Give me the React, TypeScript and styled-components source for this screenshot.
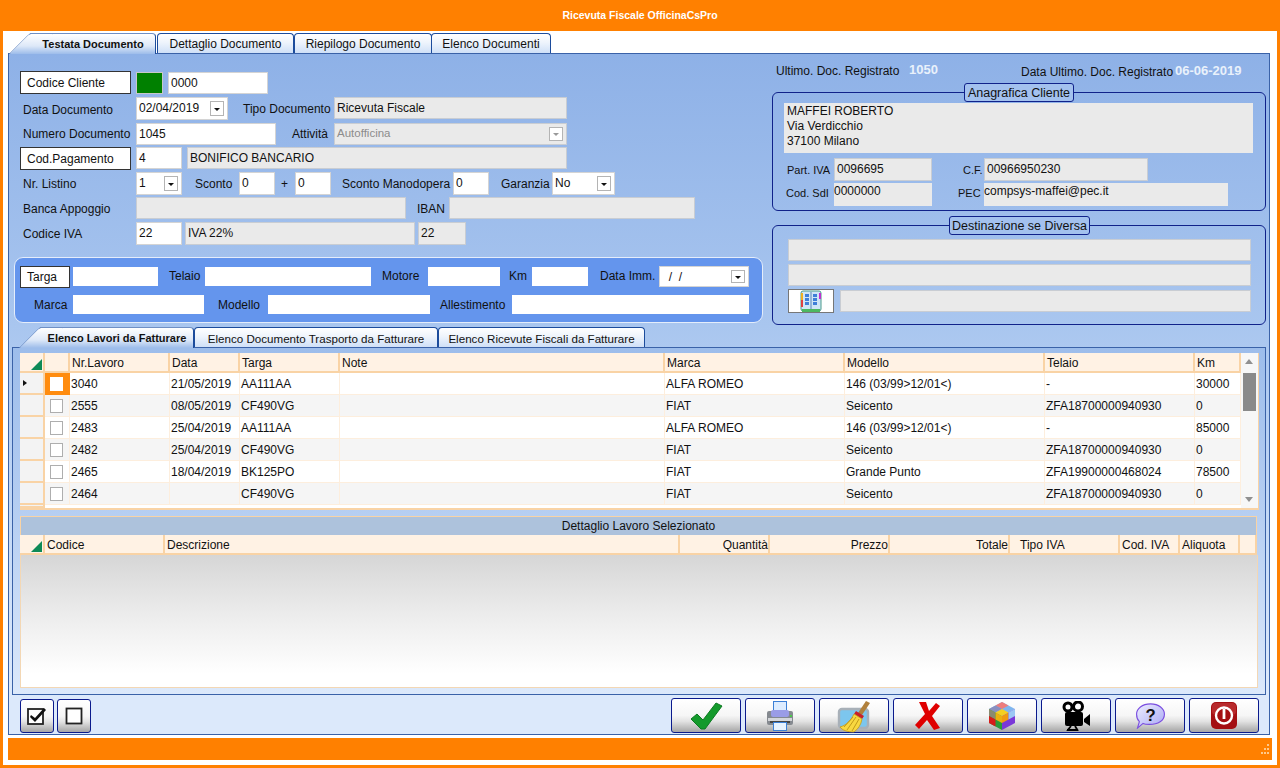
import React from "react";
import styled, { createGlobalStyle, css } from "styled-components";

const Global = createGlobalStyle`
  html, body { margin: 0; padding: 0; background: #ff8000; }
  #root { width: 1280px; height: 768px; overflow: hidden; position: relative; }
  * { box-sizing: border-box; }
`;

type P = { $x: number; $y: number; $w?: number; $h?: number };
const place = css<P>`
  position: absolute;
  left: ${(p) => p.$x}px;
  top: ${(p) => p.$y}px;
  ${(p) => (p.$w !== undefined ? `width: ${p.$w}px;` : "")}
  ${(p) => (p.$h !== undefined ? `height: ${p.$h}px;` : "")}
`;

const Win = styled.div`
  position: relative;
  width: 1280px;
  height: 768px;
  background: #ff8000;
  font-family: "Liberation Sans", Arial, sans-serif;
  font-size: 12px;
  color: #111;
  overflow: hidden;
`;
const Title = styled.div`
  position: absolute;
  left: 0; right: 0; top: 0; height: 31px;
  line-height: 31px;
  text-align: center;
  color: #fff;
  font-weight: 700;
  font-size: 10.5px;
`;
const Client = styled.div`
  position: absolute;
  left: 3px; top: 31px; width: 1274px; height: 734px;
  background: #fff;
`;
const Sheet = styled.div`
  position: absolute;
  left: 8px; top: 53px; width: 1262px; height: 682px;
  border: 1px solid #3a62a8;
  background: linear-gradient(180deg, #8eb1e7 0%, #a9c6ef 40%, #dce9fb 92%, #dce9fb 100%);
`;
const InnerSheet = styled.div`
  position: absolute;
  left: 12px; top: 347px; width: 1254px; height: 348px;
  border: 1px solid #3a62a8;
  background: linear-gradient(180deg, #9dbdeb 0%, #b7cff2 50%, #dce9fb 100%);
`;
const TabBtn = styled.div<P & { $active?: boolean; $small?: boolean }>`
  ${place}
  display: flex;
  align-items: center;
  justify-content: center;
  padding-top: 1px;
  white-space: nowrap;
  border: 1.5px solid #1c4c9c;
  border-bottom: none;
  border-radius: 4px 4px 0 0;
  background: linear-gradient(180deg, #fff 0%, #eef4fc 45%, #cfe0f7 100%);
  ${(p) => p.$small && "font-size: 11.6px;"}
  ${(p) =>
    p.$active &&
    css`
      font-weight: 700;
      font-size: 11px;
      border: none;
      background: transparent;
      z-index: 2;
      padding-left: 22px;
      &::before {
        content: "";
        position: absolute;
        left: 22px; right: 0; top: 0; bottom: 0;
        border-top: 1px solid #6f8fc4;
        border-right: 1.5px solid #1c4c9c;
        border-radius: 0 4px 0 0;
        background: linear-gradient(180deg, #fff 0%, #dde8f8 60%, #9dbcea 100%);
        z-index: -1;
      }
      &::after {
        content: "";
        position: absolute;
        left: 11px; width: 24px; top: 0; bottom: 0;
        border-left: 1px solid #6f8fc4;
        border-top: 1px solid #6f8fc4;
        transform: skewX(-45deg);
        border-radius: 3px 0 0 0;
        background: linear-gradient(180deg, #fff 0%, #dde8f8 60%, #9dbcea 100%);
        z-index: -1;
      }
    `}
`;
const Label = styled.div<P & { $white?: boolean; $small?: boolean }>`
  ${place}
  line-height: 16px;
  white-space: nowrap;
  transform: translateY(-8px);
  ${(p) => p.$small && "font-size:11px;"}
  ${(p) => p.$white && "color:#e9f1fb; font-weight:700; font-size:13px;"}
`;
const BoxLabel = styled.div<P>`
  ${place}
  background: #fff;
  border: 1px solid #333;
  padding-left: 6px;
  display: flex;
  align-items: center;
`;
const Swatch = styled.div<P>`
  ${place}
  background: #008000;
  border: 1px solid #555;
  outline: 1px solid #c8c8c8;
  outline-offset: -1px;
`;
const Input = styled.div<P & { $plain?: boolean }>`
  ${place}
  background: #fff;
  padding-left: 2px;
  line-height: 20px;
  white-space: nowrap;
  border: ${(p) => (p.$plain ? "none" : "1px solid #d4d4d4")};
`;
const Gray = styled.div<P & { $plain?: boolean; $dim?: boolean; $tight?: boolean; $lines?: boolean }>`
  ${place}
  background: #eaeaea;
  padding-left: ${(p) => (p.$tight ? 0 : 2)}px;
  line-height: ${(p) => (p.$lines ? 15 : p.$tight ? 16 : 20)}px;
  white-space: pre-line;
  border: ${(p) => (p.$plain ? "none" : "1px solid #c9cdd3")};
  ${(p) => p.$lines && "padding: 1px 0 0 3px;"}
  ${(p) => p.$dim && "color:#8c8c8c; font-size:11.5px; line-height:18px;"}
`;
const Drop = styled.span<{ $dim?: boolean }>`
  position: absolute;
  right: 3px; top: 3px; bottom: 3px; width: 14px;
  background: #fff;
  border: 1px solid #b4b4b4;
  &::after {
    content: "";
    position: absolute;
    left: 3px; top: 50%; margin-top: -1px;
    border-left: 3px solid transparent;
    border-right: 3px solid transparent;
    border-top: 3px solid ${(p) => (p.$dim ? "#999" : "#111")};
  }
`;
const Group = styled.div<P>`
  ${place}
  border: 1.5px solid #10228a;
  border-radius: 6px;
`;
const Legend = styled.div<P>`
  ${place}
  border: 1.5px solid #10228a;
  border-radius: 3px;
  background: #a3c1ee;
  display: flex;
  align-items: center;
  justify-content: center;
  font-size: 12.5px;
`;
const BookBtn = styled.div<P>`
  ${place}
  background: #fff;
  border: 1px solid #777;
  display: flex;
  align-items: center;
  justify-content: center;
`;
const VehiclePanel = styled.div`
  position: absolute;
  left: 14px; top: 257px; width: 749px; height: 66px;
  background: #6495ed;
  border: 1px solid #e4edfb;
  border-radius: 9px;
`;
const VInput = styled.div<P>`
  ${place}
  background: #fff;
`;
const GridBox = styled.div<P>`
  ${place}
  background: #fff;
  border: 2px solid #f9d3a5;
  border-top-width: 1px;
`;
const HeadCell = styled.div<P & { $right?: boolean; $pad?: number }>`
  ${place}
  background: #fff2e4;
  border-right: 2px solid #f9d3a5;
  border-bottom: 2px solid #f9d3a5;
  display: flex;
  align-items: center;
  padding: 1px 0 0 ${(p) => p.$pad ?? 2}px;
  white-space: nowrap;
  justify-content: ${(p) => (p.$right ? "flex-end" : "flex-start")};
`;
const Corner = styled.span`
  position: absolute;
  right: 1px; bottom: 1px;
  width: 0; height: 0;
  border-left: 11px solid transparent;
  border-bottom: 11px solid #0e8a56;
`;
const Row = styled.div<P & { $alt?: boolean }>`
  ${place}
  background: ${(p) => (p.$alt ? "#f5f5f5" : "#fff")};
`;
const RowHead = styled.div<P>`
  ${place}
  background: #f3f3f3;
  border-right: 2px solid #f9d3a5;
  border-bottom: 2px solid #f9d3a5;
  color: #111;
`;
const Pointer = styled.span`
  position: absolute;
  left: 3px; top: 7px;
  border-top: 3.5px solid transparent;
  border-bottom: 3.5px solid transparent;
  border-left: 4px solid #111;
`;
const Cell = styled.div<P & { $sel?: boolean }>`
  ${place}
  padding: 1px 0 0 1px;
  line-height: 21px;
  white-space: nowrap;
  border-right: 1px solid #fdeedd;
  border-bottom: 1px solid #fdeedd;
  ${(p) => p.$sel && "background:#ff8c0f; border-color:#ff8c0f;"}
`;
const Check = styled.span<{ $sel?: boolean }>`
  position: absolute;
  left: 5px; top: 4px;
  width: 13px; height: 14px;
  background: #fff;
  border: 1px solid ${(p) => (p.$sel ? "#fff" : "#aeaeae")};
`;
const Scroll = styled.div`
  position: absolute;
  left: 1241px; top: 353px; width: 17px; height: 155px;
  background: #f7f7f7;
`;
const Thumb = styled.div`
  position: absolute;
  left: 2px; top: 20px; width: 13px; height: 38px;
  background: #8a8a8a;
`;
const Arrow = styled.span<{ $down?: boolean }>`
  position: absolute;
  left: 4px;
  top: ${(p) => (p.$down ? 144 : 6)}px;
  border-left: 4.5px solid transparent;
  border-right: 4.5px solid transparent;
  ${(p) =>
    p.$down ? "border-top: 5px solid #909090;" : "border-bottom: 5px solid #909090;"}
`;
const SubTitle = styled.div`
  position: absolute;
  left: 20px; top: 516px; width: 1237px; height: 20px;
  background: #adc2dc;
  border: 1px solid #f9d3a5;
  border-bottom: none;
  text-align: center;
  line-height: 18px;
`;
const DetailBody = styled.div`
  position: absolute;
  left: 20px; top: 555px; width: 1238px; height: 133px;
  background: linear-gradient(180deg, #d6d6d6 0%, #ececec 45%, #fff 90%);
  border: 1px solid #f3d7b4;
  border-top: none;
`;
const ActionBtn = styled.div<P>`
  ${place}
  border: 1.5px solid #0b1a8c;
  border-radius: 3px;
  background: linear-gradient(180deg, #fff 0%, #f6f6f6 50%, #e2e2e2 68%, #b4b4b4 92%, #a8a8a8 100%);
  display: flex;
  align-items: center;
  justify-content: center;
`;
const StatusBar = styled.div`
  position: absolute;
  left: 8px; top: 738px; width: 1264px; height: 22px;
  background: #ff8000;
`;
const Grip = styled.span<{ $x: number; $y: number }>`
  position: absolute;
  left: ${(p) => p.$x}px;
  top: ${(p) => p.$y}px;
  width: 2px; height: 2px;
  background: #ffc98a;
`;

const CheckIcon = () => (
  <svg width="34" height="30" viewBox="0 0 34 30">
    <path d="M2 18 L8 13 L14 19 L27 2 L33 5 L16 28 L12 28 Z" fill="#149a2c" stroke="#0d7a22" strokeWidth="1" />
  </svg>
);
const PrinterIcon = () => (
  <svg width="28" height="30" viewBox="0 0 28 30">
    <rect x="7.5" y="0.5" width="13" height="11" fill="#dcecff" stroke="#3a7fd6" />
    <path d="M3 10 h22 a2 2 0 0 1 2 2 v10 a2 2 0 0 1 -2 2 H3 a2 2 0 0 1 -2 -2 V12 a2 2 0 0 1 2 -2z" fill="#85898f" />
    <rect x="5" y="9" width="18" height="7" rx="2" fill="#9a9ce6" />
    <rect x="2" y="17" width="24" height="3" fill="#d4d6da" />
    <rect x="4" y="20" width="20" height="2" fill="#444" />
    <rect x="7.5" y="21.5" width="13" height="8" fill="#e6f2ff" stroke="#3a7fd6" />
    <rect x="24" y="14" width="2" height="2" fill="#4cc84c" />
  </svg>
);
const BroomIcon = () => (
  <svg width="34" height="34" viewBox="0 0 34 34">
    <rect x="2" y="10" width="29" height="19" rx="3" fill="#7cc6ee" stroke="#a8b0b8" strokeWidth="2.4" />
    <path d="M29 2 L33 4 L25 16 L21 14 Z" fill="#b0803c" />
    <path d="M19 12 L27 17 L25 20 L17 15 Z" fill="#c8202a" />
    <path d="M17 15 L25 20 C24 26 21 30 17 33 C10 33 5 31 3 28 C10 26 14 21 17 15 Z" fill="#f8d840" stroke="#c29a1a" strokeWidth="0.8" />
    <path d="M19 18 L10 31 M22 20 L15 32 M16 18 L7 28" stroke="#c29a1a" strokeWidth="1" />
  </svg>
);
const CrossIcon = () => (
  <svg width="26" height="28" viewBox="0 0 26 28">
    <path d="M4 0 L11 0 L14 9 L21 1 L25 4 L17 14 L25 26 L19 28 L12 18 L4 27 L0 23 L10 12 Z" fill="#df0000" />
  </svg>
);
const CubeIcon = () => (
  <svg width="28" height="30" viewBox="0 0 28 34" preserveAspectRatio="none">
    <path d="M14 1 L27 9 L14 17 L1 9 Z" fill="#7fb6ee" />
    <path d="M14 1 L20.5 5 L14 9 L7.5 5 Z" fill="#ee7d7d" />
    <path d="M1 9 L7.5 5 L14 9 L7.5 13 Z" fill="#8a8fc0" />
    <path d="M1 9 L14 17 L14 33 L1 25 Z" fill="#2c9a3a" />
    <path d="M1 9 L7.5 13 L7.5 21 L1 17 Z" fill="#8a8a70" />
    <path d="M1 17 L7.5 21 L7.5 29 L1 25 Z" fill="#d81a1a" />
    <path d="M27 9 L14 17 L14 33 L27 25 Z" fill="#7a38d8" />
    <path d="M14 9 L20.5 13 L14 17 L7.5 13 Z" fill="#f4d020" />
    <path d="M7.5 13 L14 17 L14 25 L7.5 21 Z" fill="#eab010" />
    <path d="M14 17 L20.5 13 L20.5 21 L14 25 Z" fill="#f09a10" />
    <path d="M27 9 L20.5 13 L20.5 21 L27 17 Z" fill="#9cc8f4" />
  </svg>
);
const CameraIcon = () => (
  <svg width="29" height="30" viewBox="0 0 29 30">
    <circle cx="6" cy="6" r="4" fill="#fff" stroke="#000" strokeWidth="3" />
    <circle cx="16" cy="5.5" r="4.5" fill="#fff" stroke="#000" strokeWidth="3" />
    <rect x="3" y="11" width="18" height="14" rx="2" fill="#000" />
    <path d="M22 18 L28 13 L28 25 L22 21 Z" fill="#000" />
    <path d="M9 25 L5 30 M13 25 L16 30 M5 29 h11" stroke="#000" strokeWidth="1.8" />
  </svg>
);
const HelpIcon = () => (
  <svg width="31" height="26" viewBox="0 0 32 28">
    <defs>
      <linearGradient id="hb" x1="0" y1="0" x2="1" y2="1">
        <stop offset="0" stopColor="#eeeeff" />
        <stop offset="1" stopColor="#a8a8f4" />
      </linearGradient>
    </defs>
    <path d="M16 1 C25 1 31 6 31 12 C31 19 24 23 15 23 C12 23 10 23 8 22 L2 27 L4 20 C2 18 1 15 1 12 C1 6 7 1 16 1 Z" fill="url(#hb)" stroke="#7a4de0" strokeWidth="1.2" />
    <text x="16" y="19" fontFamily="Liberation Sans, sans-serif" fontWeight="700" fontSize="18" textAnchor="middle" fill="#111">?</text>
  </svg>
);
const PowerIcon = () => (
  <svg width="26" height="27" viewBox="0 0 26 27">
    <rect x="0" y="0" width="26" height="27" rx="5" fill="#a40f12" />
    <rect x="1" y="1" width="24" height="12" rx="4" fill="#b82a2c" />
    <circle cx="13" cy="13.5" r="8" fill="#a40f12" stroke="#fff" strokeWidth="2.4" />
    <rect x="11.6" y="7" width="2.8" height="10" fill="#fff" />
  </svg>
);
const CheckedIcon = () => (
  <svg width="20" height="18" viewBox="0 0 20 18">
    <rect x="1" y="2" width="15" height="15" fill="#fff" stroke="#222" strokeWidth="1.8" />
    <path d="M4 8 L8 11 L17 1 L19 3 L8 15 L3 10 Z" fill="#111" />
  </svg>
);
const EmptyIcon = () => (
  <svg width="18" height="18" viewBox="0 0 18 18">
    <rect x="1.5" y="1.5" width="15" height="15" fill="#fff" stroke="#222" strokeWidth="1.8" />
  </svg>
);
const BookIcon = () => (
  <svg width="24" height="24" viewBox="0 0 24 24">
    <rect x="2" y="2" width="20" height="20" rx="2" fill="#cfe6f7" stroke="#4a9a8a" />
    <rect x="3" y="20" width="18" height="3" fill="#4cb860" />
    <rect x="2" y="4" width="2" height="7" fill="#f0b020" />
    <rect x="2" y="11" width="2" height="7" fill="#e04040" />
    <rect x="20" y="4" width="2" height="6" fill="#c030d0" />
    <path d="M12 3 V20" stroke="#5a86b8" />
    {[5, 9, 13].map((y) => (
      <React.Fragment key={y}>
        <rect x="6" y={y} width="4" height="3" fill="#3f7fd8" />
        <rect x="14" y={y} width="4" height="3" fill="#3f7fd8" />
      </React.Fragment>
    ))}
  </svg>
);

const rows = [
  ["3040", "21/05/2019", "AA111AA", "", "ALFA ROMEO", "146 (03/99>12/01<)", "-", "30000"],
  ["2555", "08/05/2019", "CF490VG", "", "FIAT", "Seicento", "ZFA18700000940930", "0"],
  ["2483", "25/04/2019", "AA111AA", "", "ALFA ROMEO", "146 (03/99>12/01<)", "-", "85000"],
  ["2482", "25/04/2019", "CF490VG", "", "FIAT", "Seicento", "ZFA18700000940930", "0"],
  ["2465", "18/04/2019", "BK125PO", "", "FIAT", "Grande Punto", "ZFA19900000468024", "78500"],
  ["2464", "", "CF490VG", "", "FIAT", "Seicento", "ZFA18700000940930", "0"],
];
const cols = [70, 170, 240, 340, 665, 845, 1045, 1195, 1241];
const heads = ["Nr.Lavoro", "Data", "Targa", "Note", "Marca", "Modello", "Telaio", "Km"];
const detail: [string, number, number, boolean, number][] = [
  ["Codice", 45, 120, false, 2],
  ["Descrizione", 165, 515, false, 2],
  ["Quantità", 680, 90, true, 2],
  ["Prezzo", 770, 120, true, 2],
  ["Totale", 890, 120, true, 2],
  ["Tipo IVA", 1010, 110, false, 10],
  ["Cod. IVA", 1120, 60, false, 2],
  ["Aliquota", 1180, 60, false, 2],
  ["", 1240, 17, false, 2],
];
const actions = [CheckIcon, PrinterIcon, BroomIcon, CrossIcon, CubeIcon, CameraIcon, HelpIcon, PowerIcon];
const grips: [number, number][] = [
  [1267, 744], [1264, 748], [1267, 748], [1261, 752], [1264, 752], [1267, 752],
];

export default function App() {
  return (
    <Win>
      <Global />
      <Title>Ricevuta Fiscale OfficinaCsPro</Title>
      <Client />
      <Sheet />
      <TabBtn $active $x={8} $y={33} $w={148} $h={21}>Testata Documento</TabBtn>
      <TabBtn $x={157} $y={33} $w={137} $h={20}>Dettaglio Documento</TabBtn>
      <TabBtn $x={294} $y={33} $w={138} $h={20}>Riepilogo Documento</TabBtn>
      <TabBtn $x={431} $y={33} $w={120} $h={20}>Elenco Documenti</TabBtn>

      <BoxLabel $x={20} $y={71} $w={111} $h={23}>Codice Cliente</BoxLabel>
      <Swatch $x={136} $y={72} $w={27} $h={22} />
      <Input $x={168} $y={72} $w={100} $h={22}>0000</Input>

      <Label $x={23} $y={110}>Data Documento</Label>
      <Input $x={136} $y={97} $w={92} $h={23}>02/04/2019<Drop /></Input>
      <Label $x={243} $y={109}>Tipo Documento</Label>
      <Gray $x={334} $y={97} $w={233} $h={22}>Ricevuta Fiscale</Gray>

      <Label $x={23} $y={134}>Numero Documento</Label>
      <Input $x={136} $y={123} $w={140} $h={22}>1045</Input>
      <Label $x={292} $y={134}>Attività</Label>
      <Gray $x={334} $y={123} $w={233} $h={22} $dim>Autofficina<Drop $dim /></Gray>

      <BoxLabel $x={20} $y={147} $w={111} $h={23}>Cod.Pagamento</BoxLabel>
      <Input $x={136} $y={147} $w={46} $h={22}>4</Input>
      <Gray $x={187} $y={147} $w={380} $h={22}>BONIFICO BANCARIO</Gray>

      <Label $x={23} $y={184}>Nr. Listino</Label>
      <Input $x={136} $y={172} $w={46} $h={23}>1<Drop /></Input>
      <Label $x={195} $y={184}>Sconto</Label>
      <Input $x={239} $y={172} $w={36} $h={23}>0</Input>
      <Label $x={281} $y={184}>+</Label>
      <Input $x={295} $y={172} $w={36} $h={23}>0</Input>
      <Label $x={342} $y={184}>Sconto Manodopera</Label>
      <Input $x={453} $y={172} $w={36} $h={23}>0</Input>
      <Label $x={501} $y={184}>Garanzia</Label>
      <Input $x={552} $y={172} $w={63} $h={23}>No<Drop /></Input>

      <Label $x={23} $y={209}>Banca Appoggio</Label>
      <Gray $x={136} $y={197} $w={270} $h={22} />
      <Label $x={417} $y={209}>IBAN</Label>
      <Gray $x={449} $y={197} $w={246} $h={22} />

      <Label $x={23} $y={234}>Codice IVA</Label>
      <Input $x={136} $y={222} $w={46} $h={23}>22</Input>
      <Gray $x={185} $y={222} $w={230} $h={23}>IVA 22%</Gray>
      <Gray $x={418} $y={222} $w={48} $h={23}>22</Gray>

      <Label $x={776} $y={71}>Ultimo. Doc. Registrato</Label>
      <Label $x={909} $y={70} $white>1050</Label>
      <Label $x={1021} $y={72}>Data Ultimo. Doc. Registrato</Label>
      <Label $x={1175} $y={71} $white>06-06-2019</Label>

      <Group $x={772} $y={92} $w={494} $h={119} />
      <Legend $x={964} $y={83} $w={110} $h={19}>Anagrafica Cliente</Legend>
      <Gray $x={784} $y={103} $w={469} $h={50} $plain $lines>{"MAFFEI ROBERTO\nVia Verdicchio\n37100 Milano"}</Gray>
      <Label $x={787} $y={170} $small>Part. IVA</Label>
      <Gray $x={834} $y={158} $w={98} $h={23}>0096695</Gray>
      <Label $x={963} $y={170} $small>C.F.</Label>
      <Gray $x={984} $y={158} $w={164} $h={23}>00966950230</Gray>
      <Label $x={786} $y={193} $small>Cod. SdI</Label>
      <Gray $x={834} $y={183} $w={98} $h={23} $plain $tight>0000000</Gray>
      <Label $x={958} $y={193} $small>PEC</Label>
      <Gray $x={984} $y={183} $w={244} $h={23} $plain $tight>compsys-maffei@pec.it</Gray>

      <Group $x={772} $y={225} $w={494} $h={100} />
      <Legend $x={949} $y={216} $w={141} $h={19}>Destinazione se Diversa</Legend>
      <Gray $x={788} $y={239} $w={463} $h={22} />
      <Gray $x={788} $y={264} $w={463} $h={22} />
      <BookBtn $x={788} $y={289} $w={46} $h={24}><BookIcon /></BookBtn>
      <Gray $x={840} $y={290} $w={411} $h={22} />

      <VehiclePanel />
      <BoxLabel $x={20} $y={266} $w={50} $h={22}>Targa</BoxLabel>
      <VInput $x={73} $y={267} $w={85} $h={19} />
      <Label $x={169} $y={276}>Telaio</Label>
      <VInput $x={205} $y={267} $w={166} $h={19} />
      <Label $x={382} $y={276}>Motore</Label>
      <VInput $x={428} $y={267} $w={72} $h={19} />
      <Label $x={509} $y={276}>Km</Label>
      <VInput $x={532} $y={267} $w={56} $h={19} />
      <Label $x={600} $y={276}>Data Imm.</Label>
      <Input $x={659} $y={266} $w={90} $h={21}>&nbsp;&nbsp;/&nbsp;&nbsp;/<Drop /></Input>
      <Label $x={34} $y={305}>Marca</Label>
      <VInput $x={73} $y={295} $w={131} $h={19} />
      <Label $x={218} $y={305}>Modello</Label>
      <VInput $x={268} $y={295} $w={162} $h={19} />
      <Label $x={440} $y={305}>Allestimento</Label>
      <VInput $x={512} $y={295} $w={237} $h={19} />

      <InnerSheet />
      <TabBtn $active $x={18} $y={327} $w={176} $h={21}>Elenco Lavori da Fatturare</TabBtn>
      <TabBtn $small $x={194} $y={327} $w={244} $h={20}>Elenco Documento Trasporto da Fatturare</TabBtn>
      <TabBtn $small $x={438} $y={327} $w={207} $h={20}>Elenco Ricevute Fiscali da Fatturare</TabBtn>

      <GridBox $x={20} $y={353} $w={1239} $h={157} />
      <HeadCell $x={20} $y={353} $w={25} $h={20}><Corner /></HeadCell>
      <HeadCell $x={45} $y={353} $w={25} $h={20} />
      {heads.map((h, i) => (
        <HeadCell key={h} $x={cols[i]} $y={353} $w={cols[i + 1] - cols[i]} $h={20}>{h}</HeadCell>
      ))}
      {rows.map((r, ri) => {
        const y = 373 + ri * 22;
        return (
          <React.Fragment key={r[0]}>
            <Row $x={45} $y={y} $w={1196} $h={22} $alt={ri % 2 === 1} />
            <RowHead $x={20} $y={y} $w={25} $h={22}>{ri === 0 && <Pointer />}</RowHead>
            <Cell $x={45} $y={y} $w={25} $h={22} $sel={ri === 0}><Check $sel={ri === 0} /></Cell>
            {r.map((c, ci) => (
              <Cell key={ci} $x={cols[ci]} $y={y} $w={cols[ci + 1] - cols[ci]} $h={22}>{c}</Cell>
            ))}
          </React.Fragment>
        );
      })}
      <RowHead $x={20} $y={505} $w={25} $h={3} />
      <Scroll><Arrow /><Thumb /><Arrow $down /></Scroll>

      <SubTitle>Dettaglio Lavoro Selezionato</SubTitle>
      <HeadCell $x={20} $y={535} $w={25} $h={20}><Corner /></HeadCell>
      {detail.map(([t, x, w, r, pad]) => (
        <HeadCell key={x} $x={x} $y={535} $w={w} $h={20} $right={r} $pad={pad}>{t}</HeadCell>
      ))}
      <DetailBody />

      <ActionBtn $x={20} $y={699} $w={34} $h={34}><CheckedIcon /></ActionBtn>
      <ActionBtn $x={57} $y={699} $w={34} $h={34}><EmptyIcon /></ActionBtn>
      {actions.map((Icon, i) => (
        <ActionBtn key={i} $x={671 + i * 74} $y={698} $w={70} $h={35}><Icon /></ActionBtn>
      ))}
      <StatusBar />
      {grips.map(([x, y]) => <Grip key={`${x}-${y}`} $x={x} $y={y} />)}
    </Win>
  );
}
